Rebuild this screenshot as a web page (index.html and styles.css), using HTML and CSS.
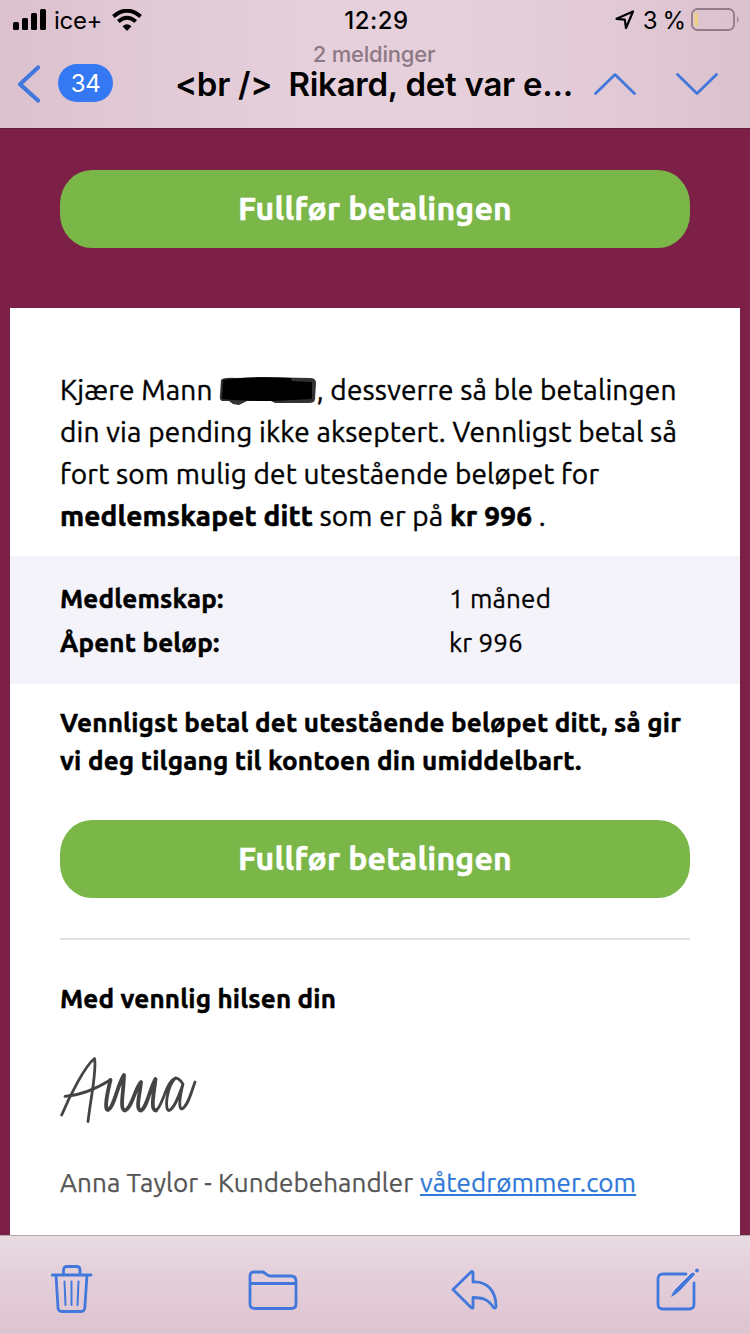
FILE: index.html
```html
<!DOCTYPE html>
<html lang="no">
<head>
<meta charset="utf-8">
<title>Mail</title>
<link rel="stylesheet" href="styles.css">
</head>
<body>
<div class="phone">
  <header class="top">
    <div class="status">
      <div class="status-left">
        <svg class="signal" width="34" height="22" viewBox="0 0 34 22"><rect x="0" y="13" width="6" height="8" rx="1.5"/><rect x="9" y="9" width="6" height="12" rx="1.5"/><rect x="18" y="4" width="6" height="17" rx="1.5"/><rect x="27" y="0" width="6" height="21" rx="1.5"/></svg>
        <span class="carrier">ice+</span>
        <svg class="wifi" width="30" height="22" viewBox="0 0 30 22"><path class="arc" d="M1.400 7.500Q15-4 28.600 7.500"/><path class="arc" d="M6.300 12.500Q15 5 23.700 12.500"/><path d="M10.500 17.200Q15 13.300 19.500 17.200L15 22Z"/></svg>
      </div>
      <span class="clock">12:29</span>
      <div class="status-right">
        <svg class="location" width="20" height="20" viewBox="0 0 20 20"><path d="M1.500 8.800L18 1.500 11 18 9.800 9.700Z"/></svg>
        <span class="percent">3 %</span>
        <svg class="battery" width="49" height="24" viewBox="0 0 49 24"><rect class="shell" x="1" y="1" width="42" height="21" rx="5.500"/><path class="cap" d="M46.200 8Q49 11.500 46.200 15Z"/><rect class="level" x="3.500" y="4.500" width="3.500" height="14" rx="1.500"/></svg>
      </div>
    </div>
    <nav class="nav">
      <svg class="back" width="24" height="38" viewBox="0 0 24 38"><path d="M21 2.500L3 19.200 21 35.500"/></svg>
      <span class="badge">34</span>
      <div class="heading">
        <span class="count">2 meldinger</span>
        <span class="subject">&lt;br /&gt;&nbsp; Rikard, det var e...</span>
      </div>
      <svg class="arrow" width="42" height="24" viewBox="0 0 42 24"><path d="M1.500 21.500L21 2.500 40.500 21.500"/></svg>
      <svg class="arrow arrow-down" width="42" height="24" viewBox="0 0 42 24"><path d="M1.500 2.500L21 21.500 40.500 2.500"/></svg>
    </nav>
  </header>
  <main class="mail">
    <section class="banner"><a class="button">Fullfør betalingen</a></section>
    <article class="card">
      <p class="intro">
        <span class="line l1"><span>Kjære Mann</span><svg class="redacted" width="98" height="32" viewBox="0 0 98 32"><path class="smudge" d="M2 5Q4 2 18 3L40 2 91 3Q97 3 97 8L96 24Q96 28 90 28L56 28 52 26H28L20 30 14 29 10 26 3 26Q0 25 1 20Z"/><path d="M4 5Q30 1 72 3L73 6 93 7V24L54 26Q24 26 3 24Z"/></svg><span>, dessverre så ble betalingen</span></span>
        <span class="line">din via pending ikke akseptert. Vennligst betal så</span>
        <span class="line">fort som mulig det utestående beløpet for</span>
        <span class="line"><b>medlemskapet ditt</b> som er på <b>kr 996</b> .</span>
      </p>
      <dl class="details">
        <dt>Medlemskap:</dt><dd>1 måned</dd>
        <dt>Åpent beløp:</dt><dd>kr 996</dd>
      </dl>
      <p class="notice">
        <span class="line">Vennligst betal det utestående beløpet ditt, så gir</span>
        <span class="line">vi deg tilgang til kontoen din umiddelbart.</span>
      </p>
      <a class="button">Fullfør betalingen</a>
      <hr class="rule">
      <p class="greeting">Med vennlig hilsen din</p>
      <svg class="signature" width="140" height="70" viewBox="0 0 140 70"><path class="thin" d="M1.700 59C10 39 25 10 34.500 2.500C37 14 31 40 28 65.500"/><path class="thin" d="M5 40.300Q26 39 50.700 23.700"/><path d="M50.500 24C47 38 44 54 48 54C54 52 58 27 64 19C64 34 59 54 65 54.500C72 52 75 32 81 26C80 38 75 54 81 54.500C87 52 90 32 95.500 23C94 38 90 54 96 54.500"/><path class="thin" d="M96 54.500C103 50 106 25 115.500 22C119 22 121 25 123 28M115.500 22C107 30 104 54 109 54.500C115 52 119 39 123 28C120 40 118 53 122 53C128 50 131 37 135 26"/></svg>
      <p class="sender"><span class="name">Anna Taylor - Kundebehandler</span><a class="link">våtedrømmer.com</a></p>
    </article>
  </main>
  <footer class="toolbar">
    <svg width="42" height="50" viewBox="0 0 42 50"><path d="M1 11H40M5 11L7 44Q7.300 47.500 11 47.500H30Q33.500 47.500 33.800 44L36 11M12.500 11V6Q12.500 2.500 16 2.500H25.500Q29 2.500 29 6V11"/><path class="fine" d="M13.500 17.500L14.500 41M20.500 17.500V41M27.500 17.500L26.500 41"/></svg>
    <svg class="low" width="50" height="42" viewBox="0 0 50 42"><path d="M2 35V7Q2 3 6 3H14Q16 3 18 5T22 7H43Q48 7 48 12V35Q48 39.500 43 39.500H7Q2 39.500 2 35ZM2 14.500H48"/></svg>
    <svg class="low reply" width="48" height="42" viewBox="0 0 48 42"><path d="M2 20.500L20.500 2.500Q22 2 22 4V13C36 12 45 22 45 37Q45 40 42.500 38.500C37 30 31 28.500 22 28.500V38Q22 40 20 38.500Z"/></svg>
    <svg width="44" height="44" viewBox="0 0 44 44"><path d="M30 7H7Q2 7 2 12V37Q2 42 7 42H33Q38 42 38 37V16"/><path class="solid" d="M16 29Q17 25 20 22L35.500 6.500Q38 5 38.500 7.500L24 23Q20 27 16 29Z"/><circle class="solid" cx="41" cy="3.500" r="1.500"/></svg>
  </footer>
</div>
</body>
</html>
```
FILE: styles.css
```css
* { box-sizing: border-box; }
body { margin: 0; }
p, dl, dd { margin: 0; }
svg { display: block; flex: none; }
.phone {
  display: flex; flex-direction: column;
  width: 750px; height: 1334px; overflow: hidden;
  background: #7c2048; color: #000;
  font-family: Ubuntu, "Noto Sans", sans-serif;
  letter-spacing: .17px;
}
.top {
  height: 128px; flex: none;
  background: linear-gradient(90deg, #dcc0ce 0, #e0c9d5 18%, #e6d0dc 42%, #e5cfda 68%, #dbc1ce 100%);
  font-family: Inter, "Liberation Sans", sans-serif;
  letter-spacing: 0;
}
.status {
  display: grid; grid-template-columns: 1fr auto 1fr; align-items: center;
  height: 40px; padding: 0 10px 0 13px; font-size: 24px;
}
.status-left, .status-right { display: flex; align-items: center; }
.status-right { justify-content: flex-end; }
.carrier { margin-left: 7px; width: 58px; white-space: nowrap; letter-spacing: -.3px; }
.wifi .arc { fill: none; stroke: #000; stroke-width: 4; }
.clock { font-weight: 500; letter-spacing: .5px; }
.location path { fill: none; stroke: #000; stroke-width: 2.200; stroke-linejoin: round; }
.percent { margin: 0 6px 0 8px; letter-spacing: -1px; }
.shell { fill: none; stroke: #927b87; stroke-width: 1.800; }
.cap { fill: #927b87; }
.level { fill: #edcf85; }
.nav { display: flex; align-items: flex-start; height: 88px; padding: 0 32px 0 17px; }
.back { margin-top: 25px; }
.back path { fill: none; stroke: #4278dc; stroke-width: 4.200; stroke-linecap: round; stroke-linejoin: round; }
.badge {
  width: 55px; height: 38px; margin: 24px 0 0 17px; border-radius: 19px;
  background: #3479f3; color: #fff; font-size: 24px; line-height: 39px; text-align: center;
  letter-spacing: -.5px;
}
.heading { display: flex; flex-direction: column; align-items: center; width: 398px; margin-left: 62px; }
.count { color: #8c7984; font-size: 22px; font-weight: 500; line-height: 28px; letter-spacing: -.2px; }
.subject { font-size: 33px; font-weight: 600; line-height: 33px; white-space: nowrap; letter-spacing: -.25px; }
.arrow { margin: 32px 0 0 21px; }
.arrow-down { margin-left: 40px; }
.arrow path { fill: none; stroke: #4278dc; stroke-width: 2.800; stroke-linecap: round; stroke-linejoin: round; }
.mail { flex: none; height: 1107px; overflow: hidden; border-top: 1px solid #641d3c; }
.banner { height: 179px; padding: 41px 60px 0; }
.button {
  display: block; height: 78px; border-radius: 32px / 34px;
  background: #7ab648; color: #fff;
  font-size: 32px; font-weight: 700; line-height: 77px; text-align: center;
  letter-spacing: .22px; -webkit-text-stroke: .5px;
}
.card { height: 927px; margin: 0 10px; padding: 61px 50px 0; background: #fff; }
.line { display: block; white-space: nowrap; }
.intro { font-size: 28px; line-height: 42px; -webkit-text-stroke: .4px; }
.intro b { -webkit-text-stroke: .6px; }
.l1 { display: flex; }
.redacted { margin: 6px 0 0 6px; }
.redacted path { stroke: none; }
.smudge { fill: #333; }
.details {
  display: grid; grid-template-columns: 389px 1fr; align-content: start;
  height: 128px; margin: 19px -50px 0; padding: 21px 50px 0;
  background: #f4f3fa; font-size: 26px; line-height: 44px; -webkit-text-stroke: .3px;
}
.details dt, .notice, .greeting { font-weight: 700; -webkit-text-stroke: .5px; }
.notice { margin: 20px 0 40px; font-size: 26px; line-height: 38px; letter-spacing: .2px; }
.rule { height: 2px; margin: 40px 0 0; border: 0; background: #e0e0e0; }
.greeting { margin-top: 40px; font-size: 26px; line-height: 38px; }
.signature { margin-top: 38px; }
.signature path { fill: none; stroke: #444; stroke-width: 3.800; stroke-linecap: round; stroke-linejoin: round; }
.signature .thin { stroke-width: 2.800; }
.sender { display: flex; margin-top: 38px; color: #555; font-size: 26px; line-height: 38px; white-space: nowrap; letter-spacing: .1px; -webkit-text-stroke: .25px; }
.name { width: 360px; }
.link { color: #3079d8; text-decoration: underline; }
.toolbar {
  display: flex; justify-content: space-between; align-items: center; flex: 1;
  padding: 8px 50px 0 51px; border-top: 1px solid #aaa;
  background: linear-gradient(180deg, #e8dbe1 0, #e4d0db 35%, #dec3d0 100%);
}
.toolbar path { fill: none; stroke: #4278dc; stroke-width: 2.800; stroke-linecap: round; stroke-linejoin: round; }
.toolbar .low { margin-top: 2px; }
.toolbar .reply { margin-left: -2px; margin-right: 2px; }
.toolbar .fine { stroke-width: 2; }
.toolbar .solid { fill: #4278dc; stroke: #4278dc; stroke-width: 1; }
```
